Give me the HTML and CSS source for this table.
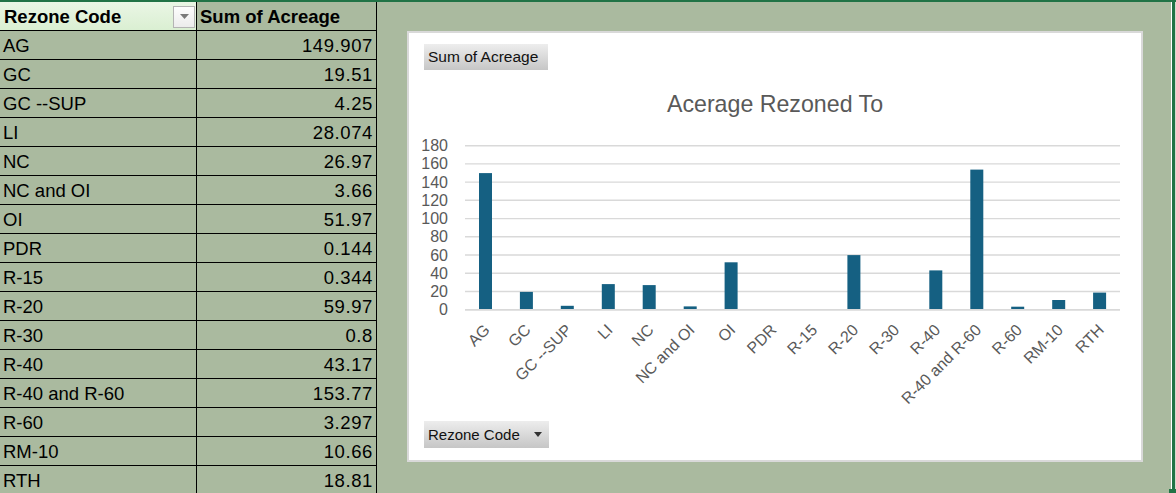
FILE: index.html
```html
<!DOCTYPE html>
<html>
<head>
<meta charset="utf-8">
<title>Acerage Rezoned To</title>
<link rel="stylesheet" href="styles.css">
</head>
<body>
<div class="window">
  <div class="sheet">
    <table class="pivot">
      <thead>
        <tr>
          <th class="h-code"><div class="h-inner"><span>Rezone Code</span><span class="dd"><svg width="9" height="5" viewBox="0 0 9 5"><path d="M0 0H9L4.5 5Z" fill="#7a7a7a"/></svg></span></div></th>
          <th class="h-sum">Sum of Acreage</th>
        </tr>
      </thead>
      <tbody>
        <tr><td>AG</td><td class="num">149.907</td></tr>
        <tr><td>GC</td><td class="num">19.51</td></tr>
        <tr><td>GC --SUP</td><td class="num">4.25</td></tr>
        <tr><td>LI</td><td class="num">28.074</td></tr>
        <tr><td>NC</td><td class="num">26.97</td></tr>
        <tr><td>NC and OI</td><td class="num">3.66</td></tr>
        <tr><td>OI</td><td class="num">51.97</td></tr>
        <tr><td>PDR</td><td class="num">0.144</td></tr>
        <tr><td>R-15</td><td class="num">0.344</td></tr>
        <tr><td>R-20</td><td class="num">59.97</td></tr>
        <tr><td>R-30</td><td class="num">0.8</td></tr>
        <tr><td>R-40</td><td class="num">43.17</td></tr>
        <tr><td>R-40 and R-60</td><td class="num">153.77</td></tr>
        <tr><td>R-60</td><td class="num">3.297</td></tr>
        <tr><td>RM-10</td><td class="num">10.66</td></tr>
        <tr><td>RTH</td><td class="num">18.81</td></tr>
      </tbody>
    </table>

    <div class="chart">
      <div class="field-btn btn-sum">Sum of Acreage</div>
      <div class="chart-title">Acerage Rezoned To</div>
      <svg class="plot" width="732" height="303" viewBox="0 0 732 303">
        <g stroke="#D9D9D9" stroke-width="1.4">
          <line x1="56" x2="711" y1="27.7" y2="27.7"/>
          <line x1="56" x2="711" y1="45.9" y2="45.9"/>
          <line x1="56" x2="711" y1="64.1" y2="64.1"/>
          <line x1="56" x2="711" y1="82.3" y2="82.3"/>
          <line x1="56" x2="711" y1="100.6" y2="100.6"/>
          <line x1="56" x2="711" y1="118.8" y2="118.8"/>
          <line x1="56" x2="711" y1="137.0" y2="137.0"/>
          <line x1="56" x2="711" y1="155.2" y2="155.2"/>
          <line x1="56" x2="711" y1="173.5" y2="173.5"/>
        </g>
        <g class="ylab" text-anchor="end">
          <text x="39" y="27.7">180</text>
          <text x="39" y="45.9">160</text>
          <text x="39" y="64.1">140</text>
          <text x="39" y="82.3">120</text>
          <text x="39" y="100.6">100</text>
          <text x="39" y="118.8">80</text>
          <text x="39" y="137.0">60</text>
          <text x="39" y="155.2">40</text>
          <text x="39" y="173.5">20</text>
          <text x="39" y="191.7">0</text>
        </g>
        <g fill="#156082">
          <rect x="70.0" y="55.1" width="13" height="136.6"/>
          <rect x="110.9" y="173.9" width="13" height="17.8"/>
          <rect x="151.8" y="187.8" width="13" height="3.9"/>
          <rect x="192.8" y="166.1" width="13" height="25.6"/>
          <rect x="233.7" y="167.1" width="13" height="24.6"/>
          <rect x="274.7" y="188.4" width="13" height="3.3"/>
          <rect x="315.6" y="144.3" width="13" height="47.4"/>
          <rect x="356.6" y="191.6" width="13" height="0.1"/>
          <rect x="397.5" y="191.4" width="13" height="0.3"/>
          <rect x="438.4" y="137.1" width="13" height="54.6"/>
          <rect x="479.4" y="191.0" width="13" height="0.7"/>
          <rect x="520.3" y="152.4" width="13" height="39.3"/>
          <rect x="561.3" y="51.6" width="13" height="140.1"/>
          <rect x="602.2" y="188.7" width="13" height="3.0"/>
          <rect x="643.2" y="182.0" width="13" height="9.7"/>
          <rect x="684.1" y="174.6" width="13" height="17.1"/>
        </g>
        <line x1="56" x2="711" y1="191.9" y2="191.9" stroke="#D9D9D9" stroke-width="1.6"/>
        <g class="xlab" text-anchor="end">
          <text transform="translate(78 209) rotate(-45)">AG</text>
          <text transform="translate(118.9 209) rotate(-45)">GC</text>
          <text transform="translate(159.8 209) rotate(-45)">GC --SUP</text>
          <text transform="translate(200.8 209) rotate(-45)">LI</text>
          <text transform="translate(241.7 209) rotate(-45)">NC</text>
          <text transform="translate(282.7 209) rotate(-45)">NC and OI</text>
          <text transform="translate(323.6 209) rotate(-45)">OI</text>
          <text transform="translate(364.6 209) rotate(-45)">PDR</text>
          <text transform="translate(405.5 209) rotate(-45)">R-15</text>
          <text transform="translate(446.4 209) rotate(-45)">R-20</text>
          <text transform="translate(487.4 209) rotate(-45)">R-30</text>
          <text transform="translate(528.3 209) rotate(-45)">R-40</text>
          <text transform="translate(569.3 209) rotate(-45)">R-40 and R-60</text>
          <text transform="translate(610.2 209) rotate(-45)">R-60</text>
          <text transform="translate(651.2 209) rotate(-45)">RM-10</text>
          <text transform="translate(692.1 209) rotate(-45)">RTH</text>
        </g>
      </svg>
      <div class="field-btn btn-code"><span>Rezone Code</span><svg class="tri" width="8" height="5" viewBox="0 0 8 5"><path d="M0 0H8L4 5Z" fill="#333"/></svg></div>
    </div>
  </div>
  <div class="edge"></div>
  <div class="handle"></div>
</div>
</body>
</html>
```

FILE: styles.css
```css
html, body {
  margin: 0;
  padding: 0;
  background: #AABA9F;
}

.window {
  position: relative;
  width: 1176px;
  height: 493px;
  box-sizing: border-box;
  border-top: 2px solid #217346;
  display: flex;
  background: #AABA9F;
  overflow: hidden;
  font-family: "Liberation Sans", Arial, sans-serif;
}

.sheet {
  flex: 1;
  display: flex;
  align-items: flex-start;
}

.edge {
  width: 3px;
  border-left: 1px solid #ffffff;
  border-right: 1px solid #d3dccd;
  background: #217346;
}

.handle {
  position: absolute;
  right: 0;
  bottom: 0;
  width: 7px;
  height: 4px;
  background: #217346;
}

/* pivot table */
.pivot {
  border-collapse: collapse;
  table-layout: fixed;
  width: 377px;
  font-size: 18.5px;
  color: #000;
}

.pivot th,
.pivot td {
  height: 27px;
  padding: 1px 3px 0;
  border-right: 1px solid #000;
  border-bottom: 1px solid #000;
  box-sizing: content-box;
  white-space: nowrap;
  line-height: 27px;
}

.pivot th {
  font-weight: bold;
  text-align: left;
}

.pivot td:first-child,
.pivot th:first-child {
  width: 190px;
}

.h-code {
  background: linear-gradient(#EAF6E5, #DAEFD2);
}

.h-inner {
  display: flex;
  align-items: center;
  justify-content: space-between;
}

.h-inner span:first-child {
  padding-left: 1px;
}

.dd {
  width: 22px;
  height: 22px;
  margin-right: -2px;
  box-sizing: border-box;
  border: 1px solid #B4B4B4;
  background: linear-gradient(#FDFDFD, #ECECEC);
  display: flex;
  align-items: center;
  justify-content: center;
}

.h-sum {
  background: #AABA9F;
}

.num {
  text-align: right;
  letter-spacing: 0.6px;
}

/* chart */
.chart {
  margin-left: 30px;
  margin-top: 29px;
  width: 736px;
  height: 431px;
  box-sizing: border-box;
  border: 2px solid #D9D9D9;
  background: #ffffff;
  display: flex;
  flex-direction: column;
}

.field-btn {
  display: flex;
  align-items: center;
  box-sizing: border-box;
  margin-left: 15px;
  padding-left: 4px;
  background: linear-gradient(#EDEDED, #C6C6C6);
  font-size: 15.5px;
  color: #111;
}

.btn-sum {
  width: 124px;
  height: 26px;
  margin-top: 11px;
}

.btn-code {
  width: 125px;
  height: 27px;
  gap: 14px;
  font-size: 15px;
}

.chart-title {
  margin-top: 20px;
  height: 28px;
  line-height: 28px;
  text-align: center;
  font-size: 23.2px;
  color: #595959;
}

.plot {
  display: block;
}

.ylab text,
.xlab text {
  font-family: "Liberation Sans", Arial, sans-serif;
  font-size: 16px;
  fill: #595959;
  dominant-baseline: central;
}
```
